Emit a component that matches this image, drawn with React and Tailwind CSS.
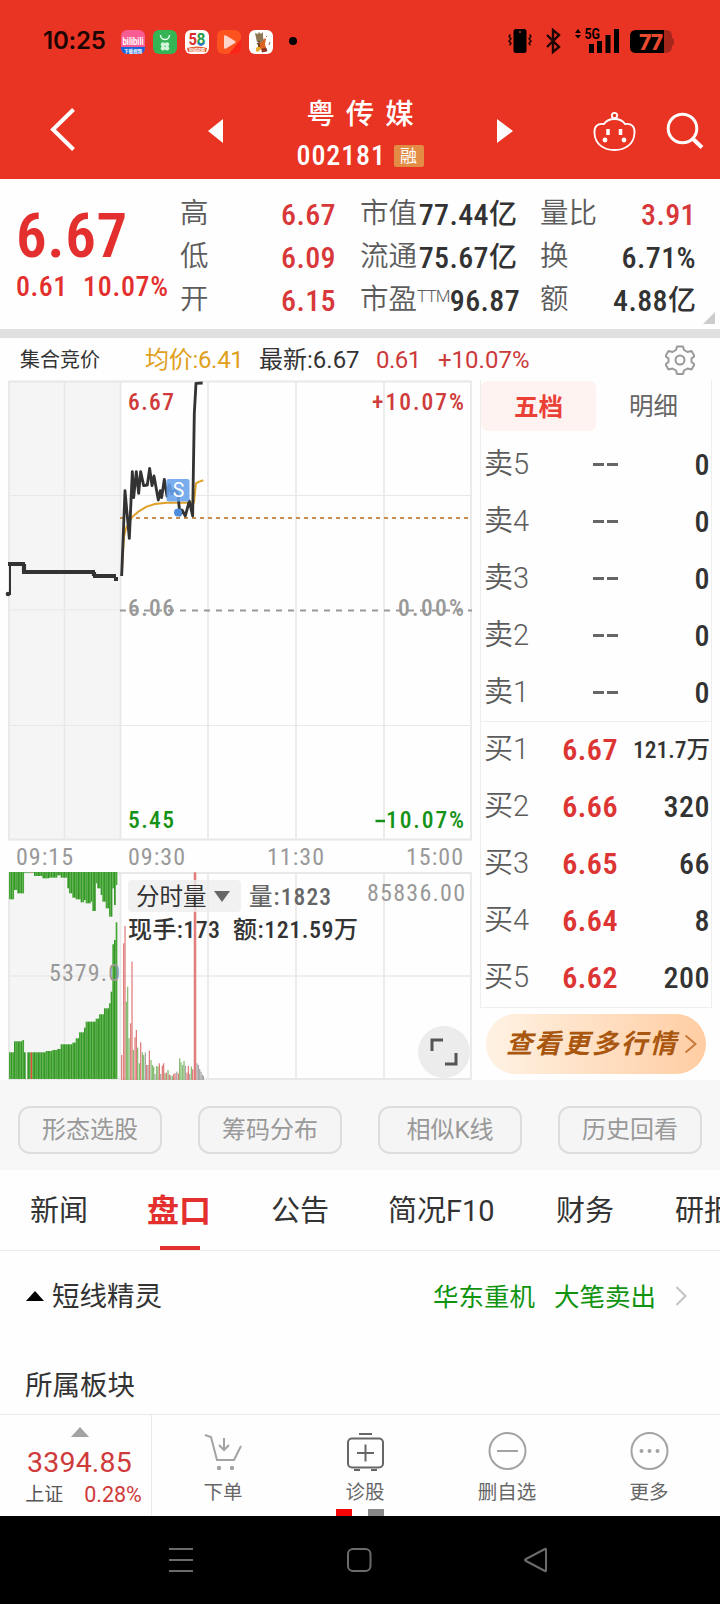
/* eslint-disable react/prop-types */
const SERIES_COLORS = { r: "#e07575", g: "#7fba6b", k: "#a3a3a3" };

const QUOTE_COLUMNS = [
  {
    className: "ml-[5px] w-[156px]",
    rows: [
      { label: "高", value: "6.67", red: true },
      { label: "低", value: "6.09", red: true },
      { label: "开", value: "6.15", red: true },
    ],
  },
  {
    className: "ml-[24px] w-[157px]",
    rows: [
      { label: "市值", value: "77.44", unit: "亿" },
      { label: "流通", value: "75.67", unit: "亿" },
      { label: "市盈", sup: "TTM", value: "96.87" },
    ],
  },
  {
    className: "ml-[23px] w-[156px]",
    rows: [
      { label: "量比", value: "3.91", red: true },
      { label: "换", value: "6.71%" },
      { label: "额", value: "4.88", unit: "亿" },
    ],
  },
];

const ASKS = ["卖5", "卖4", "卖3", "卖2", "卖1"];

const BIDS = [
  { label: "买1", price: "6.67", volume: "121.7万", small: true },
  { label: "买2", price: "6.66", volume: "320" },
  { label: "买3", price: "6.65", volume: "66" },
  { label: "买4", price: "6.64", volume: "8" },
  { label: "买5", price: "6.62", volume: "200" },
];

const PRICE_LINE =
  "365,618 375,362 388,505 397,305 401,383 409,305 416,370 422,305 431,347 442,345 449,295 456,347 462,318 475,390 481,362 485,383 493,328 501,378 508,345 515,372 525,358 534,375 540,435 546,420 556,438 568,393 578,438 583,130 588,40 608,39";
const AVERAGE_LINE =
  "365,618 372,500 378,475 397,440 415,425 440,410 465,402 500,398 582,398 588,340 598,335 610,331";

// [start x, edge y] steps of the two auction volume areas
const AUCTION_TOP = [
  [27, 298], [42, 270], [52, 280], [72, 218], [100, 228], [125, 235], [145, 233],
  [170, 226], [182, 233], [199, 265], [205, 280], [215, 293], [225, 298], [240, 307],
  [250, 300], [258, 310], [270, 305], [278, 333], [284, 250], [292, 265], [299, 285],
  [308, 305], [316, 325], [328, 350], [336, 265], [342, 315], [347, 255],
];
const AUCTION_BOTTOM = [
  [27, 757], [42, 724], [67, 720], [72, 757], [135, 753], [155, 750], [170, 747],
  [180, 733], [215, 728], [225, 715], [235, 697], [250, 683], [258, 665], [285, 656],
  [297, 643], [312, 625], [325, 610], [331, 575], [337, 433], [343, 420], [346, 367],
];

const VOLUME_BARS = [
  [365, 765, "r"], [371, 430, "r"], [375, 378, "r"], [379, 605, "g"], [383, 560, "g"],
  [387, 715, "g"], [392, 670, "r"], [396, 485, "r"], [400, 750, "g"], [405, 712, "r"],
  [409, 690, "r"], [413, 743, "g"], [418, 790, "g"], [422, 727, "r"], [427, 757, "g"],
  [431, 765, "g"], [436, 757, "k"], [440, 795, "r"], [444, 795, "k"], [448, 752, "r"],
  [453, 780, "g"], [457, 795, "g"], [461, 800, "g"], [465, 822, "k"], [470, 798, "g"],
  [474, 800, "g"], [478, 790, "r"], [482, 822, "k"], [487, 797, "r"], [491, 790, "r"],
  [495, 820, "g"], [499, 818, "r"], [504, 810, "g"], [508, 824, "r"], [512, 826, "k"],
  [517, 828, "g"], [521, 822, "r"], [525, 820, "r"], [530, 815, "k"], [535, 820, "r"],
  [539, 775, "g"], [543, 787, "g"], [548, 795, "g"], [552, 783, "g"], [556, 797, "k"],
  [561, 818, "r"], [565, 798, "r"], [569, 822, "k"], [574, 800, "g"], [578, 808, "r"],
  [583, 217, "r"], [587, 217, "r"], [591, 790, "k"], [595, 795, "k"], [599, 807, "k"],
  [603, 815, "k"], [607, 824, "k"], [610, 828, "k"],
];

function stepAt(steps, x) {
  let edge = steps[0][1];
  for (const [start, y] of steps) {
    if (x >= start) edge = y;
  }
  return edge;
}

function StatusBar() {
  return (
    <div className="flex h-[82px] items-center text-[#1c0503]">
      <span className="ml-[43px] w-[78px] font-['Inter'] text-[24px] font-semibold tracking-[-0.200px]">
        10:25
      </span>
      <div className="mt-px flex gap-2">
        <svg className="size-6" viewBox="0 0 24 24" fontFamily="Roboto, 'Noto Sans CJK SC'" textAnchor="middle">
          <rect width="24" height="24" rx="6" fill="#f95c93" />
          <path d="M0 17h24v1a6 6 0 0 1-6 6H6a6 6 0 0 1-6-6z" fill="#1763dc" />
          <text x="12" y="14.500" fontSize="10.500" fontWeight="700" fill="#fff" textLength="21" lengthAdjust="spacingAndGlyphs">
            bilibili
          </text>
          <text x="12" y="22.500" fontSize="4.500" fontWeight="700" fill="#fff">下载视频</text>
        </svg>
        <svg className="size-6" viewBox="0 0 24 24">
          <rect width="24" height="24" rx="6" fill="#35b455" />
          <path d="M7.500 5a4.500 4.500 0 0 0 9 0" fill="none" stroke="#e3ffe9" strokeWidth="1.500" />
          <g fill="#d3f5da">
            <circle cx="10" cy="14.500" r="2.200" />
            <circle cx="14" cy="14.500" r="2.200" />
            <circle cx="10" cy="18.200" r="2.200" />
            <circle cx="14" cy="18.200" r="2.200" />
          </g>
        </svg>
        <svg className="size-6" viewBox="0 0 24 24" fontFamily="Roboto, 'Noto Sans CJK SC'" fontWeight="700">
          <rect width="24" height="24" rx="6" fill="#fff" />
          <text x="3.500" y="15" fontSize="17" fill="#d92d2a" textLength="8.500" lengthAdjust="spacingAndGlyphs">
            5
          </text>
          <text x="11.500" y="15" fontSize="17" fill="#2d9c48" textLength="9" lengthAdjust="spacingAndGlyphs">
            8
          </text>
          <path d="M13 13q3 4 6 0" stroke="#2673cf" strokeWidth="2" fill="none" />
          <path d="M2 18q10-3 20 0l-1 4H3z" fill="#e8562c" />
          <text x="4" y="21.500" fontSize="4" fill="#fff">同城招聘</text>
        </svg>
        <svg className="size-6" viewBox="0 0 24 24">
          <rect width="24" height="24" rx="6" fill="#fc5220" />
          <path d="M12 24h6a6 6 0 0 0 6-6V9z" fill="#fb2418" />
          <path d="M7 6.500q0-2 2-1l9 5.500q1.500 1 0 2L9 18.500q-2 1-2-1z" fill="#ffd5cb" />
        </svg>
        <svg className="size-6" viewBox="0 0 24 24">
          <rect width="24" height="24" rx="6" fill="#fff" />
          <path d="M6 3l3 1 1-2 2 2 2-2v5l1 4-3 2-4-1-1-4z" fill="#8d7656" />
          <path d="M9 13l4-1 3-4 1 1-1 5 1 4-4 2-4-2z" fill="#dd6420" />
          <path d="M7 18l3-2 2 3-3 3-2-1z" fill="#e9a92a" />
          <path d="M13 19l4-1 1 3-5 1zM20 15l1-3M17 7l1-1" fill="#8e321f" stroke="#8e321f" strokeWidth="0.800" />
          <path d="M10 11v6M8 13l3 4" stroke="#4a3322" fill="none" />
        </svg>
      </div>
      <span className="ml-4 size-2 rounded-full bg-black" />
      <svg className="ml-[211px] h-[28px] w-[170px]" viewBox="508 27 170 28">
        <rect x="513.500" y="29" width="13" height="24" rx="2.500" />
        <circle cx="520" cy="32" r="0.900" fill="#e93423" />
        <path
          d="M510.500 34.500l-1.500 2 2 2.300-2 2.300 2 2.300-1.500 2M529.500 34.500l1.500 2-2 2.300 2 2.300-2 2.300 1.500 2"
          fill="none"
          stroke="#1c0503"
          strokeWidth="1.500"
        />
        <path
          d="M547 35l12 12-6 5V30l6 5-12 12"
          fill="none"
          stroke="#1c0503"
          strokeWidth="2.400"
        />
        <path d="M575 33l3-4 3 4zM575 35l3 3.500 3-3.500z" />
        <text
          x="584.500"
          y="39"
          fontSize="14"
          fontWeight="700"
          fontFamily="Roboto"
          textLength="15.500"
          lengthAdjust="spacingAndGlyphs"
        >
          5G
        </text>
        <path d="M589 44h5v9h-5zM597 41h5v12h-5zM605.500 35h5v18h-5zM614 29h5v24h-5z" />
        <path d="M664 30h2q6 0 6 6v2l2 1v5l-2 2q0 7-6 7h-2z" fill="#a6261c" />
        <path d="M636 30h28v23h-28q-6 0-6-6V36q0-6 6-6z" fill="#000" />
        <text x="639" y="49.500" fontSize="21" fontWeight="800" fontFamily="Inter" fill="#e9492f" textLength="24">
          77
        </text>
      </svg>
    </div>
  );
}

function Header() {
  return (
    <header className="flex h-[179px] flex-col bg-[#e93423]">
      <StatusBar />
      <div className="flex flex-1 items-start text-white">
        <svg className="ml-[48px] mt-[24px] h-[48px] w-[30px]" viewBox="48 106 30 48">
          <path d="M73.500 109.500L53 129.500l20.500 20" fill="none" stroke="#fff" strokeWidth="4" />
        </svg>
        <svg className="ml-[130px] mt-[37px] h-6 w-[15px]" viewBox="0 0 15 24">
          <path d="M15 0v24L0 12z" fill="#fff" />
        </svg>
        <div className="mt-[12px] flex w-[274px] flex-col items-center">
          <h1 className="ml-[11px] text-[28.500px] font-medium leading-[42px] tracking-[10.800px]">粤传媒</h1>
          <div className="mt-[-1px] flex h-[42px] items-center gap-[10px]">
            <span className="w-[87px] whitespace-nowrap text-[28px] font-medium tracking-[0.900px] [font-stretch:75%]">
              002181
            </span>
            <span className="h-[22px] w-[30px] rounded-[2px] bg-[#e38c46] text-center text-[17px] leading-[22px]">
              融
            </span>
          </div>
        </div>
        <svg className="mt-[37px] h-6 w-[16px]" viewBox="0 0 16 24">
          <path d="M0 0v24l16-12z" fill="#fff" />
        </svg>
        <svg className="ml-[80px] mt-[28px] h-[42px] w-[43px]" viewBox="593 110 43 42">
          <path
            d="M604 124c-7-1-10 3-9.500 9 .5 11 9 17 20 17s19.500-6 20-17c.5-6-2.500-10-9.500-9-2-3-5-5-10.500-5s-8.500 2-10.500 5z"
            fill="none"
            stroke="#fff"
            strokeWidth="1.800"
          />
          <circle cx="614.500" cy="115.500" r="2.700" fill="none" stroke="#fff" strokeWidth="1.800" />
          <path d="M608 129v6M620.500 129v6" stroke="#fff" strokeWidth="3.500" />
          <circle cx="605" cy="140" r="2.400" fill="#fff" />
          <circle cx="624" cy="140" r="2.400" fill="#fff" />
        </svg>
        <svg className="ml-[29px] mt-[29px] h-[40px] w-[40px]" viewBox="665 111 40 40">
          <circle cx="682.500" cy="128.500" r="14.300" fill="none" stroke="#fff" strokeWidth="3" />
          <path d="M692.500 138.500l9.500 9" stroke="#fff" strokeWidth="4" />
        </svg>
      </div>
    </header>
  );
}

function QuoteSummary() {
  return (
    <section className="relative flex h-[150px]">
      <div className="w-[175px] shrink-0 whitespace-nowrap pl-[16px] text-[#e3302f]">
        <p className="mt-[24px] text-[61px] font-semibold leading-[66px] tracking-[0.600px] [font-stretch:75%]">
          6.67
        </p>
        <p className="flex gap-[17px] text-[28px] font-medium leading-[36px] [font-stretch:75%]">
          <span className="w-[50px] tracking-[0.500px]">0.61</span>
          <span className="tracking-[0.700px]">10.07%</span>
        </p>
      </div>
      {QUOTE_COLUMNS.map((column) => (
        <dl key={column.rows[0].label} className={`${column.className} mt-[14px] shrink-0`}>
          {column.rows.map((row) => (
            <div key={row.label} className="flex h-[43px] items-center justify-between whitespace-nowrap">
              <dt className="flex text-[28.500px] font-[350] text-[#5c5c5c]">
                {row.label}
                {row.sup && (
                  <sup className="top-[7px] text-[17px] leading-[20px] tracking-[-0.800px]">{row.sup}</sup>
                )}
              </dt>
              <dd
                className={`flex items-center text-[30px] font-medium tracking-[0.400px] [font-stretch:75%] ${
                  row.red ? "text-[#d8383a]" : "text-[#333]"
                }`}
              >
                {row.value}
                {row.unit && <span className="text-[28px] font-medium tracking-normal">{row.unit}</span>}
              </dd>
            </div>
          ))}
        </dl>
      ))}
      <svg className="absolute bottom-[5px] right-[5px] size-3" viewBox="0 0 12 12">
        <path d="M12 0v12H0z" fill="#ccc" />
      </svg>
    </section>
  );
}

function InfoRow() {
  return (
    <div className="flex h-[42px] items-center whitespace-nowrap pt-[2px] text-[24px]">
      <span className="ml-[20px] w-[125px] text-[20px] text-[#333]">集合竞价</span>
      <span className="w-[114px] tracking-[-0.300px] text-[#e0a01c]">均价:6.41</span>
      <span className="w-[117px] text-[#333]">最新:6.67</span>
      <span className="w-[62px] tracking-[-0.500px] text-[#cc3a3a]">0.61</span>
      <span className="w-[227px] text-[#cc3a3a]">+10.07%</span>
      <svg
        className="size-[30px]"
        viewBox="0 0 30 30"
        fill="none"
        stroke="#999"
        strokeWidth="2"
        strokeLinejoin="round"
      >
        <path d="M12 1.500h6l1 3.500 3.500 2 4-1 3 5-3 2.500v3.500l3 2.500-3 5-4-1-3.500 2-1 3.500h-6l-1-3.500-3.500-2-4 1-3-5 3-2.500v-3.500l-3-2.500 3-5 4 1 3.500-2z" />
        <circle cx="15" cy="15" r="4.500" />
      </svg>
    </div>
  );
}

function ChartText({ x, y, width, color, size = 23.5, weight = 500, children }) {
  return (
    <text
      x={x}
      y={y}
      fill={color}
      fontSize={size}
      fontWeight={weight}
      textLength={width}
      className="[font-stretch:75%]"
      fontFamily="Roboto, 'Noto Sans CJK SC', sans-serif"
    >
      {children}
    </text>
  );
}

function PriceChart() {
  return (
    <svg className="block h-[462px] w-[480px]" viewBox="0 0 480 462">
      <rect x="8" y="1" width="112" height="459" fill="#f5f5f5" />
      <g stroke="#e8e8e8" fill="none">
        <path d="M8 115.500h464M8 230h112M8 345.500h464" strokeWidth="1.200" />
        <path d="M64.500 1v458M208 1v458M296 1v458M384 1v458" strokeWidth="1.600" />
        <path d="M9 1.500h462v458H9zM120.500 1v458" strokeWidth="1.800" />
      </g>
      <path d="M120 138h350" stroke="#c8904e" strokeWidth="2" strokeDasharray="4 4" />
      <path d="M120 230.500h352" stroke="#999" strokeWidth="2" strokeDasharray="6 6" />

      <ChartText x="128" y="29.500" width="46" color="#cf3a3a">6.67</ChartText>
      <ChartText x="372" y="29.500" width="92" color="#cf3a3a">+10.07%</ChartText>
      <ChartText x="128" y="235.500" width="46" color="#999">6.06</ChartText>
      <ChartText x="398" y="235.500" width="66" color="#999">0.00%</ChartText>
      <ChartText x="128" y="447.500" width="46" color="#159215">5.45</ChartText>
      <path d="M375.500 441h9.500" stroke="#159215" strokeWidth="2.500" />
      <ChartText x="386" y="447.500" width="78" color="#159215">10.07%</ChartText>

      <path d="M8 214h2v-30" fill="none" stroke="#333" strokeWidth="2" />
      <circle cx="8" cy="214" r="2.300" fill="#333" />
      <path
        d="M8 184h17M22 192h73M93 196h23M114 199h4M24 184v8M94 192v4"
        fill="none"
        stroke="#333"
        strokeWidth="4.200"
      />
      <g transform="translate(0 -10) scale(0.3333)" fill="none" strokeLinejoin="round">
        <polyline points={AVERAGE_LINE} stroke="#dfa02a" strokeWidth="6" />
        <polyline points={PRICE_LINE} stroke="#333" strokeWidth="8.500" />
      </g>
      <circle cx="178" cy="132.500" r="4" fill="#4d8ddb" />
      <rect x="166.500" y="99" width="23" height="22.500" rx="2" fill="#66a2ec" fillOpacity="0.880" />
      <text x="178.500" y="117" fill="#fff" fontSize="19.500" textAnchor="middle" fontFamily="Roboto">
        S
      </text>
    </svg>
  );
}

function VolumeChart() {
  const auctionBars = Array.from({ length: 65 }, (_, i) => 27 + i * 5);
  return (
    <svg className="block h-[208px] w-[480px]" viewBox="0 0 480 208">
      <rect x="8" y="1" width="112" height="206" fill="#f5f5f5" />
      <g stroke="#e8e8e8" fill="none">
        <path d="M8 104h464" strokeWidth="1.600" />
        <path d="M64.500 1v206M208 1v206M296 1v206M384 1v206" strokeWidth="1.600" />
        <path d="M9 1h462v206H9zM120.500 1v206" strokeWidth="1.800" />
      </g>
      <g transform="translate(0 -72) scale(0.3333)">
        {auctionBars.map((x, i) => {
          const top = stepAt(AUCTION_TOP, x + 1);
          const bottom = stepAt(AUCTION_BOTTOM, x + 1);
          const color = i % 2 ? "#37962a" : "#46a834";
          return (
            <g key={x} fill={x === 92 ? "#dd4c35" : color}>
              <rect x={x} y="216" width="5.200" height={top - 216} />
              {x !== 77 && <rect x={x} y={bottom} width="5.200" height={837 - bottom} />}
            </g>
          );
        })}
        {VOLUME_BARS.map(([x, top, series]) => (
          <rect key={x} x={x - 1.7} y={top} width="3.600" height={840 - top} fill={SERIES_COLORS[series]} />
        ))}
      </g>
      <ChartText x="49" y="108.500" width="71" color="#999" size="24" weight="400">5379.0</ChartText>
      <ChartText x="249" y="33" width="82" color="#666">量:1823</ChartText>
      <ChartText x="367" y="28.500" width="98" color="#999" size="24" weight="400">85836.00</ChartText>
      <ChartText x="128" y="66" width="92" color="#333" size="24">现手:173</ChartText>
      <ChartText x="233" y="66" width="125" color="#333" size="24">额:121.59万</ChartText>
    </svg>
  );
}

function Charts() {
  return (
    <div className="w-[480px] shrink-0">
      <PriceChart />
      <div className="flex h-[30px] items-center text-[24px] tracking-[1px] text-[#999] [font-stretch:75%]">
        <span className="ml-[16px] w-[112px]">09:15</span>
        <span className="w-[139px]">09:30</span>
        <span className="w-[139px]">11:30</span>
        <span>15:00</span>
      </div>
      <div className="relative">
        <VolumeChart />
        <button
          type="button"
          className="absolute left-[128px] top-[8px] flex h-8 w-[113px] items-center gap-[7px] rounded bg-[#eee]/80 pl-2 text-[23.500px] text-[#333]"
        >
          <span className="mt-[3px]">分时量</span>
          <svg className="h-[11px] w-4" viewBox="0 0 16 11">
            <path d="M0 0h16L8 11z" fill="#666" />
          </svg>
        </button>
        <button
          type="button"
          className="absolute left-[418px] top-[154px] size-[52px] rounded-full bg-[#ececec]"
        >
          <svg viewBox="0 0 52 52" fill="none" stroke="#555" strokeWidth="3">
            <path d="M14 25V14h11M38 27v11H27" />
          </svg>
        </button>
      </div>
    </div>
  );
}

function BookRow({ label, price, volume, small }) {
  return (
    <div className="flex h-[57px] items-center whitespace-nowrap text-[30px] font-medium">
      <span className="w-[68px] pl-[3px] text-[29px] font-[350] text-[#5c5c5c]">{label}</span>
      {price ? (
        <span className="w-[69px] text-right font-semibold tracking-[0.500px] text-[#dc3534] [font-stretch:75%]">
          {price}
        </span>
      ) : (
        <span className="flex w-[69px] justify-end gap-[3px]">
          <span className="h-[3px] w-[11px] bg-[#666]" />
          <span className="h-[3px] w-[11px] bg-[#666]" />
        </span>
      )}
      <span
        className={`flex-1 pr-px text-right text-[#333] [font-stretch:75%] ${
          small ? "pt-[2px] text-[23.500px]" : "tracking-[0.500px]"
        }`}
      >
        {volume}
      </span>
    </div>
  );
}

function OrderBook() {
  return (
    <aside className="w-[232px]">
      <div className="h-[628px] border-x border-b border-[#eee]">
        <div className="flex h-[56px] text-center text-[24.500px] leading-[54px]">
          <button type="button" className="mt-px h-[50px] w-[115px] rounded-md bg-[#fff3f2] font-bold text-[#ea4036]">
            五档
          </button>
          <button type="button" className="h-[50px] flex-1 text-[#666]">
            明细
          </button>
        </div>
        {ASKS.map((label) => (
          <BookRow key={label} label={label} volume="0" />
        ))}
        <hr className="border-[#eee]" />
        <div className="mt-[-1px]">
          {BIDS.map((row) => (
            <BookRow key={row.label} {...row} />
          ))}
        </div>
      </div>
      <button
        type="button"
        className="ml-[6px] mt-[6px] flex h-[60px] w-[220px] items-center rounded-full bg-linear-to-r from-[#fff2e3] to-[#ffcda3] pl-[14px] text-[#a9560f]"
      >
        <span className="w-[184px] whitespace-nowrap text-[26.500px] font-bold italic tracking-[2.200px]">
          查看更多行情
        </span>
        <svg className="h-[20px] w-[13px]" viewBox="0 0 13 20">
          <path d="M1.500 1.500l10 8.500-10 8.500" fill="none" stroke="#c77a3c" strokeWidth="2" />
        </svg>
      </button>
    </aside>
  );
}

function ToolPills() {
  return (
    <div className="flex h-[90px] items-start justify-between bg-[#f7f7f7] px-[18px]">
      {["形态选股", "筹码分布", "相似K线", "历史回看"].map((name) => (
        <button
          key={name}
          type="button"
          className="mt-[26px] h-[48px] w-[144px] rounded-[12px] border-2 border-[#ddd] bg-[#f5f5f5] text-[24px] leading-[45px] text-[#999]"
        >
          {name}
        </button>
      ))}
    </div>
  );
}

function SectionTabs() {
  return (
    <nav className="flex h-[81px] items-stretch overflow-hidden whitespace-nowrap border-b border-[#eaeaea] text-[29px] leading-[83px] text-[#333]">
      <span className="ml-[30px] w-[117px] shrink-0">新闻</span>
      <span className="flex w-[124px] shrink-0 flex-col text-[32px] font-bold text-[#e3302f]">
        <span className="h-[76px]">盘口</span>
        <span className="ml-[13px] h-1 w-10 bg-[#e3302f]" />
      </span>
      <span className="w-[117px] shrink-0">公告</span>
      <span className="w-[168px] shrink-0">简况F10</span>
      <span className="w-[119px] shrink-0">财务</span>
      <span className="shrink-0">研报</span>
    </nav>
  );
}

function NewsRows() {
  return (
    <section className="h-[163px] text-[27.500px] text-[#333]">
      <div className="flex h-[92px] items-center">
        <svg className="mb-[3px] ml-[26px] mr-[8px] h-[10px] w-[18px]" viewBox="0 0 18 10">
          <path d="M0 10h18L9 0z" fill="#000" />
        </svg>
        <span>短线精灵</span>
        <span className="ml-auto mr-[19px] text-[25.500px] text-[#109410]">华东重机</span>
        <span className="mr-[19px] text-[25.500px] text-[#109410]">大笔卖出</span>
        <svg className="mb-[3px] mr-[33px] h-[20px] w-[12px]" viewBox="0 0 12 20">
          <path d="M1.500 1l9 9-9 9" fill="none" stroke="#c4c4c4" strokeWidth="2" />
        </svg>
      </div>
      <h2 className="ml-[25px] mt-[22px] leading-[42px]">所属板块</h2>
    </section>
  );
}

const ACTIONS = [
  {
    name: "下单",
    color: "#a3a3a3",
    icon: (
      <>
        <path d="M1 4l6 2 6 23h17l7-14M20 7v12M15 14l5 5 5-5" />
        <circle cx="15" cy="37" r="1.200" />
        <circle cx="28" cy="37" r="1.200" />
      </>
    ),
  },
  {
    name: "诊股",
    color: "#666",
    icon: (
      <>
        <rect x="2" y="7.500" width="35" height="29" rx="4" />
        <path d="M13 3h13M19.500 13.500v17M11 22h17M8 39h6M25 39h6" />
      </>
    ),
  },
  {
    name: "删自选",
    color: "#a3a3a3",
    icon: (
      <>
        <circle cx="19.500" cy="20" r="18" />
        <path d="M9 20h21" />
      </>
    ),
  },
  {
    name: "更多",
    color: "#a3a3a3",
    icon: (
      <>
        <circle cx="19.500" cy="20" r="18" />
        <circle cx="11.500" cy="20" r="1" />
        <circle cx="19.500" cy="20" r="1" />
        <circle cx="27.500" cy="20" r="1" />
      </>
    ),
  },
];

function BottomBar() {
  return (
    <footer className="relative flex h-[102px] border-t border-[#eaeaea]">
      <div className="flex w-[152px] flex-col items-center border-r border-[#eaeaea] pl-[8px]">
        <svg className="mt-[12px] h-[10px] w-[18px]" viewBox="0 0 18 10">
          <path d="M0 10h18L9 0z" fill="#a3a3a3" />
        </svg>
        <p className="mt-[9px] text-[28.500px] leading-[34px] tracking-[0.200px] text-[#cf3a3a]">3394.85</p>
        <p className="ml-[8px] flex gap-[21px] text-[19px] leading-[30px]">
          <span className="text-[#555]">上证</span>
          <span className="text-[21.500px] text-[#cf3a3a]">0.28%</span>
        </p>
      </div>
      {ACTIONS.map(({ name, color, icon }) => (
        <button key={name} type="button" className="flex flex-1 flex-col items-center">
          <svg
            className="mt-[16px] h-[40px] w-[39px] overflow-visible"
            viewBox="0 0 39 40"
            fill="none"
            stroke={color}
            strokeWidth="2"
          >
            {icon}
          </svg>
          <span className="mt-[7px] text-[19.500px] leading-[30px] text-[#666]">{name}</span>
        </button>
      ))}
      <div className="absolute bottom-0 left-[336px] flex gap-4">
        <span className="h-[7px] w-4 bg-[#f50505]" />
        <span className="h-[7px] w-4 bg-[#888]" />
      </div>
    </footer>
  );
}

function SystemNav() {
  return (
    <div className="flex h-[88px] items-center bg-black">
      <svg
        className="h-[28px] w-full"
        viewBox="0 0 720 28"
        fill="none"
        stroke="#6b6b6b"
        strokeWidth="2"
        strokeLinejoin="round"
      >
        <path d="M169 3h24M169 14h24M169 25h24" />
        <rect x="348" y="3" width="22.500" height="22" rx="5" />
        <path d="M546 3.500v21q0 1-1 .5l-19-10q-2-1 0-2l19-10q1-.5 1 .5z" />
      </svg>
    </div>
  );
}

export default function App() {
  return (
    <div className="h-[1604px] w-[720px] overflow-hidden bg-[#fefefe] font-[Roboto,'Noto_Sans_CJK_SC',sans-serif]">
      <Header />
      <QuoteSummary />
      <div className="h-[9px] bg-[#e0e0e0]" />
      <InfoRow />
      <main className="flex h-[700px]">
        <Charts />
        <OrderBook />
      </main>
      <ToolPills />
      <SectionTabs />
      <NewsRows />
      <BottomBar />
      <SystemNav />
    </div>
  );
}
